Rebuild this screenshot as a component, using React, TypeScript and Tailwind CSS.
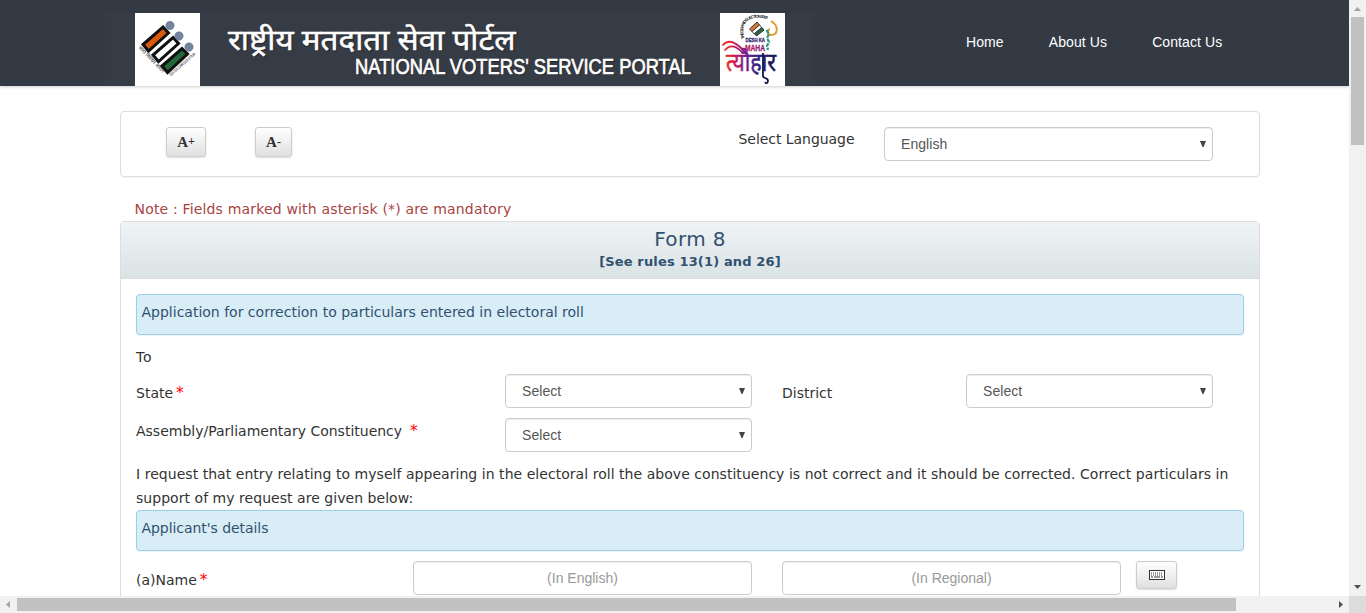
import React from "react";

const label = "font-['DejaVu_Sans',sans-serif] text-[14px] leading-6 text-[#333] whitespace-nowrap";

function Star({ className = "ml-[3px]" }: { className?: string }) {
  return <span className={`font-['DejaVu_Sans',sans-serif] text-[15.500px] leading-none text-[#f00] ${className}`}>*</span>;
}

function SelectBox({ value, className }: { value: string; className: string }) {
  return (
    <div className={`flex h-[34px] items-center justify-between rounded-[4px] border border-[#ccc] bg-white pl-4 pr-[6px] shadow-[inset_0_1px_1px_rgba(0,0,0,0.075)] ${className}`}>
      <span className="text-[14px] leading-5 tracking-[0.05px] text-[#555]">{value}</span>
      <svg width="6" height="6" viewBox="0 0 6 6"><path d="M0 0h6L3.500 6h-1z" fill="#444" /></svg>
    </div>
  );
}

function ElectionLogo() {
  return (
    <svg width="65" height="73" viewBox="0 0 65 73" className="shrink-0 bg-white">
      <g stroke="#111" strokeWidth="3">
        <path d="M28 14L33.500 20L13.500 38L8 31.500Z" fill="#d95b0b" />
        <path d="M38 24.500L43.500 30.500L23.500 48.500L18 42Z" fill="#fff" />
        <path d="M47 35.500L52.500 41L32.500 59.500L27 53Z" fill="#23683a" />
      </g>
      <g fill="#72849e" stroke="#5b6b84" strokeWidth=".5"><circle cx="35" cy="12.500" r="4.200" /><circle cx="44" cy="23" r="4.200" /><circle cx="54" cy="34" r="4.200" /></g>
      <text x="3" y="35" transform="rotate(46 3 35)" fontSize="5.500" fontFamily="Noto Sans, sans-serif" fill="#222" textLength="35" lengthAdjust="spacingAndGlyphs">भारत निर्वाचन आयोग</text>
      <text x="36" y="63" transform="rotate(-41 36 63)" fontSize="4.200" fontFamily="Liberation Sans" fill="#222" textLength="33" lengthAdjust="spacingAndGlyphs">ELECTION COMMISSION OF INDIA</text>
    </svg>
  );
}

function FestivalLogo() {
  return (
    <svg width="65" height="73" viewBox="0 0 65 73" className="shrink-0 bg-white">
      <defs>
        <linearGradient id="ink" gradientUnits="userSpaceOnUse" x1="4" y1="0" x2="58" y2="0"><stop offset="0" stopColor="#f5301c" /><stop offset=".2" stopColor="#d01c50" /><stop offset=".38" stopColor="#7c1c90" /><stop offset=".6" stopColor="#382080" /><stop offset="1" stopColor="#171345" /></linearGradient>
        <linearGradient id="peak" x1="0" x2="1"><stop offset="0" stopColor="#d81c40" /><stop offset="1" stopColor="#5c1c80" /></linearGradient>
        <path id="arc" d="M24.500 26C18 3 38 2 51 7.500" />
      </defs>
      <text fontSize="4.200" fontWeight="700" fontFamily="Liberation Sans" fill="#111"><textPath href="#arc" textLength="40">THE GRAND ELECTION 2019</textPath></text>
      <g stroke="#333" strokeWidth="1"><path d="M37 9l2.500 3-7 7-3-3z" fill="#d57a35" /><path d="M39.500 12l2 2.500-7 6.500-2.500-2.500z" fill="#fff" /><path d="M42 14.500l2 2.500-7.500 6-2-2.500z" fill="#276b43" /></g>
      <path d="M51 8l3 2M52 9c7 4 6 13-1 13-4 0-4-5-1-6" fill="none" stroke="#e49b39" strokeWidth="2" />
      <path d="M46.500 17l2.500 4-2 4 2 4-2 4 1 4" fill="none" stroke="#2b9b79" strokeWidth="2.200" strokeDasharray="4 1" />
      <text x="25.500" y="29" fontSize="6.200" fontWeight="700" fontFamily="Liberation Sans" fill="#30246d" stroke="#30246d" strokeWidth=".3" textLength="19.500" lengthAdjust="spacingAndGlyphs">DESH KA</text>
      <text x="25" y="37.500" fontSize="9" fontWeight="700" fontFamily="Liberation Sans" fill="url(#peak)" stroke="#a0186a" strokeWidth=".3" textLength="20" lengthAdjust="spacingAndGlyphs">MAHA</text>
      <g fill="none" stroke="url(#ink)" strokeLinecap="round" strokeWidth="1.800">
        <path d="M3 32C9 25 17 30 26 40M5 37C11 30 17 34 23 40" />
      </g>
      <text x="6" y="58" fontSize="25" fontWeight="400" fontFamily="Noto Sans, sans-serif" fill="url(#ink)" stroke="url(#ink)" strokeWidth=".5" textLength="50" lengthAdjust="spacingAndGlyphs">त्यौहार</text>
      <path d="M43 40V64M43 63c1 4 5 1 5 5q-1 4-3 1" stroke="#171345" strokeWidth="1.800" fill="none" />
    </svg>
  );
}

function TextInput({ placeholder, className }: { placeholder: string; className: string }) {
  return <input placeholder={placeholder} className={`h-[34px] w-[339px] rounded-[4px] border border-[#ccc] bg-white text-center text-[14px] shadow-[inset_0_1px_1px_rgba(0,0,0,0.075)] placeholder:text-[#999] ${className}`} />;
}

const button = "flex items-center justify-center rounded-[3px] border border-[#ccc] bg-linear-to-b from-white to-[#e0e0e0] shadow-[0_1px_2px_rgba(0,0,0,0.12)]";
const notice = "h-[41px] w-[1108px] rounded-[4px] border border-[#9acfea] bg-[#d9edf7] pl-[4.500px] pt-[5px] shadow-[0_1px_2px_rgba(0,0,0,0.05)]";

export default function App() {
  return (
    <div className="flex h-[613px] w-[1366px] flex-col overflow-hidden bg-white font-['Liberation_Sans',sans-serif]">
      <div className="flex h-[596px]">
        <main className="h-[596px] w-[1349px] overflow-hidden">
          <header className="flex h-[86px] items-start bg-[#333a44] shadow-[0_1px_3px_rgba(0,0,0,0.2)]">
            <div className="ml-[105px] mt-[13px] flex h-[73px] w-[709px] bg-[#363c46] pl-[30px]">
              <ElectionLogo />
              <div className="ml-[28px] w-[492px] pt-[8px] text-white [text-shadow:1px_1px_1px_#222]">
                <div className="h-[34px] w-fit origin-left scale-x-[1.083] whitespace-nowrap pt-[3px] font-['Noto_Sans_Devanagari','Noto_Sans',sans-serif] text-[29px] leading-[38px] [-webkit-text-stroke:0.5px_#fff]">राष्ट्रीय मतदाता सेवा पोर्टल</div>
                <div className="ml-[127px] h-[24px] w-[365px]">
                  <div className="w-fit origin-left scale-x-[0.834] whitespace-nowrap text-[22px] leading-[24px] [-webkit-text-stroke:0.7px_#fff]">NATIONAL VOTERS' SERVICE PORTAL</div>
                </div>
              </div>
              <FestivalLogo />
            </div>
            <nav className="ml-[152px] flex gap-[45px] pt-[32px] text-[14px] leading-[21px] tracking-[0.1px] text-white">
              <a>Home</a><a>About Us</a><a>Contact Us</a>
            </nav>
          </header>

          <section className="ml-[120px] mt-[25px] flex h-[66px] w-[1140px] rounded-[4px] border border-[#ddd] pl-[45px] pt-[15px] shadow-[0_1px_1px_rgba(0,0,0,0.05)]">
            <button className={`${button} h-[30px] w-[40px] font-['Liberation_Serif',serif] text-[15px] font-bold text-[#333]`}>A<span className="pb-[2px] text-[12px]">+</span></button>
            <button className={`${button} ml-[49px] h-[30px] w-[37px] font-['Liberation_Serif',serif] text-[15px] font-bold text-[#333]`}>A<span className="pb-px text-[12px]">-</span></button>
            <span className={`${label} ml-[446.500px] w-[145.500px] tracking-[-0.050px]`}>Select Language</span>
            <SelectBox value="English" className="w-[329px]" />
          </section>

          <p className="ml-[134.500px] mt-[20px] h-[24px] whitespace-nowrap font-['DejaVu_Sans',sans-serif] text-[14px] leading-6 tracking-[0.170px] text-[#a94442]">Note : Fields marked with asterisk (*) are mandatory</p>

          <section className="ml-[120px] h-[500px] w-[1140px] rounded-[4px] border border-[#ddd]">
            <div className="h-[57px] border-b border-[#ddd] bg-linear-to-b from-[#eff3f6] to-[#dae3e5] text-center font-['DejaVu_Sans',sans-serif] text-[#31516f]">
              <h1 className="pt-[5px] text-[20px] leading-6 tracking-[0.350px]">Form 8</h1>
              <p className="text-[13px] font-bold leading-[21px] tracking-[0.150px]">[See rules 13(1) and 26]</p>
            </div>
            <div className="pl-[15px] pt-[15px]">
              <div className={notice}><span className={`${label} !text-[#31516f]`}>Application for correction to particulars entered in electoral roll</span></div>
              <p className={`${label} mt-[10px] tracking-[0.800px]`}>To</p>
              <div className="mt-[5px] flex h-[34px]">
                <span className={`${label} w-[369px] pt-[7px]`}>State<Star /></span>
                <SelectBox value="Select" className="w-[247px]" />
                <span className={`${label} ml-[30px] w-[184px] pt-[7px]`}>District</span>
                <SelectBox value="Select" className="w-[247px]" />
              </div>
              <div className="mt-[10px] flex h-[34px]">
                <span className={`${label} w-[369px] pt-px`}>Assembly/Parliamentary Constituency<Star className="ml-[8px]" /></span>
                <SelectBox value="Select" className="w-[247px]" />
              </div>
              <p className={`${label} mt-[10px] h-12 tracking-[0.041px]`}>I request that entry relating to myself appearing in the electoral roll the above constituency is not correct and it should be corrected. Correct particulars in<br />support of my request are given below:</p>
              <div className={notice}><span className={`${label} !text-[#31516f] tracking-[-0.060px]`}>Applicant's details</span></div>
              <div className="mt-[10px] flex">
                <span className={`${label} w-[277px] pt-[7px]`}>(a)Name<Star /></span>
                <TextInput placeholder="(In English)" className="" />
                <TextInput placeholder="(In Regional)" className="ml-[30px]" />
                <button className={`${button} ml-[15px] h-[28px] w-[41px]`}>
                  <svg width="16" height="10" viewBox="0 0 16 10"><rect x=".5" y=".5" width="15" height="9" fill="white" stroke="#333" /><path d="M2 3h12M2 5h12" stroke="#333" strokeDasharray="1 1" /><path d="M2 7h2M5 7h6M12 7h2" stroke="#333" /></svg>
                </button>
              </div>
            </div>
          </section>
        </main>
        <aside className="flex w-[17px] flex-col items-center bg-[#f1f1f1]">
          <svg width="7" height="4" className="mt-[7px] shrink-0"><path d="M0 4L3.500 0L7 4z" fill="#a3a3a3" /></svg>
          <div className="mt-[6px] h-[128px] w-[13px] bg-[#c1c1c1]" />
          <svg width="7" height="4" className="mb-[7px] mt-auto"><path d="M0 0h7L3.500 4z" fill="#505050" /></svg>
        </aside>
      </div>
      <div className="flex h-[17px] items-center bg-[#f1f1f1]">
        <svg width="4" height="7" className="ml-[6px]"><path d="M4 0v7L0 3.500z" fill="#a3a3a3" /></svg>
        <div className="ml-[7px] h-[13px] w-[1219px] bg-[#c1c1c1]" />
        <svg width="4" height="7" className="ml-auto mr-[6px]"><path d="M0 0v7L4 3.500z" fill="#505050" /></svg>
        <div className="h-[17px] w-[17px] bg-[#dcdcdc]" />
      </div>
    </div>
  );
}
